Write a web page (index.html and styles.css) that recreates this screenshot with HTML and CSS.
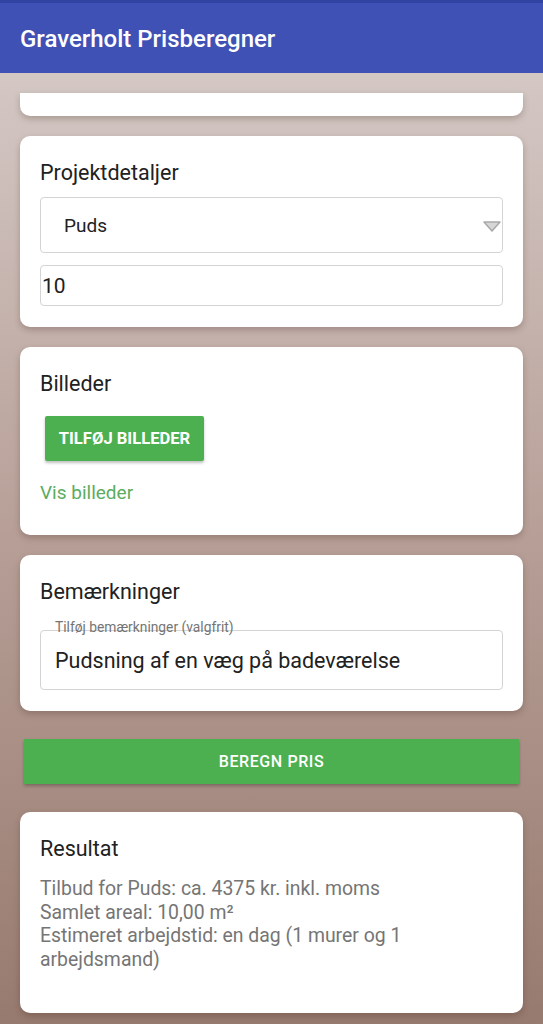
FILE: index.html
```html
<!DOCTYPE html>
<html lang="da">
<head>
  <meta charset="UTF-8">
  <meta name="viewport" content="width=device-width, initial-scale=1.0">
  <title>Graverholt Prisberegner</title>
  <link rel="stylesheet" href="styles.css">
</head>
<body>

  <header class="app-bar">
    <h1>Graverholt Prisberegner</h1>
  </header>

  <main class="content">
    <!-- kort der er rullet delvist ud af syne -->
    <section class="card card-cut"></section>

    <section class="card">
      <h2>Projektdetaljer</h2>
      <div class="select">
        <span>Puds</span>
        <svg class="arrow" width="18" height="11" viewBox="0 0 18 11">
          <path d="M1 1 L17 1 L9 10 Z" fill="#d6d6d6" stroke="#a9a9a9" stroke-width="1.5" stroke-linejoin="round"/>
        </svg>
      </div>
      <input class="field" type="text" value="10">
    </section>

    <section class="card">
      <h2>Billeder</h2>
      <button class="btn btn-small">TILFØJ BILLEDER</button>
      <a href="#" class="link">Vis billeder</a>
    </section>

    <section class="card">
      <h2>Bemærkninger</h2>
      <label class="hint">Tilføj bemærkninger (valgfrit)</label>
      <input class="field field-notes" type="text" value="Pudsning af en væg på badeværelse">
    </section>

    <button class="btn btn-wide">BEREGN PRIS</button>

    <section class="card card-result">
      <h2>Resultat</h2>
      <p class="result">
        Tilbud for Puds: ca. 4375 kr. inkl. moms<br>
        Samlet areal: 10,00 m²<br>
        Estimeret arbejdstid: en dag (1 murer og 1 arbejdsmand)
      </p>
    </section>
  </main>

</body>
</html>
```

FILE: styles.css
```css
body {
  margin: 0;
  height: 1024px;
  overflow: hidden;
  font-family: Roboto, "Noto Sans", Arial, sans-serif;
  color: #212121;
  background: linear-gradient(to bottom, #d8cecb 0px, #b9a29a 500px, #977a6f 1024px);
}

.app-bar {
  height: 70px;
  background-color: #3f51b5;
  border-top: 3px solid #3143a3;
  display: flex;
  align-items: center;
  padding: 0 20px;
}

.app-bar h1 {
  margin: 0;
  font-size: 24px;
  font-weight: 500;
  color: white;
  padding-top: 2px;
}

.content {
  display: flex;
  flex-direction: column;
  padding: 0 20px;
}

.card {
  background-color: white;
  border-radius: 10px;
  box-shadow: 0 3px 6px rgba(60, 30, 20, 0.25);
  padding: 24px 20px 21px;
  margin-top: 20px;
  display: flex;
  flex-direction: column;
}

.card-cut {
  height: 23px;
  padding: 0;
  border-radius: 0 0 10px 10px;
}

.card h2 {
  margin: 0 0 12px;
  font-size: 21.5px;
  font-weight: 400;
  line-height: 25px;
  color: #212121;
}

.select {
  height: 54px;
  border: 1px solid #d4d4d4;
  border-radius: 4px;
  display: flex;
  align-items: center;
  justify-content: space-between;
  padding: 0 1px 0 23px;
  font-size: 19px;
  margin-bottom: 12px;
}

.arrow {
  margin-top: 2px;
}

.field {
  height: 41px;
  box-sizing: border-box;
  border: 1px solid #d4d4d4;
  border-radius: 4px;
  padding: 0 1px;
  font-family: inherit;
  font-size: 21px;
  color: #212121;
  background: white;
  outline: none;
}

.field-notes {
  height: 60px;
  padding: 0 14px;
  font-size: 21.5px;
}

.hint {
  font-size: 13.8px;
  color: #757575;
  line-height: 14px;
  margin: 4px 0 -4px 15px;
  position: relative;
  z-index: 1;
}

.btn {
  border: none;
  background-color: #4caf50;
  color: white;
  font-family: inherit;
  font-weight: 500;
  box-shadow: 0 2px 3px rgba(0, 0, 0, 0.25);
}

.btn-small {
  align-self: flex-start;
  margin: 8px 0 0 5px;
  width: 159px;
  height: 45px;
  border-radius: 2px;
  font-size: 16.6px;
  font-weight: 700;
}

.link {
  margin: 20px 0 9px;
  font-size: 19px;
  color: #5cac60;
  text-decoration: none;
  line-height: 24px;
}

.btn-wide {
  margin: 28px 4px 0;
  height: 45px;
  border-radius: 0;
  font-size: 16px;
  letter-spacing: 0.6px;
}

.card-result {
  margin-top: 28px;
  height: 156px;
}

.card-result h2 {
  margin-bottom: 16px;
}

.result {
  margin: 0;
  font-size: 19.4px;
  line-height: 23.7px;
  color: #757575;
}
```
